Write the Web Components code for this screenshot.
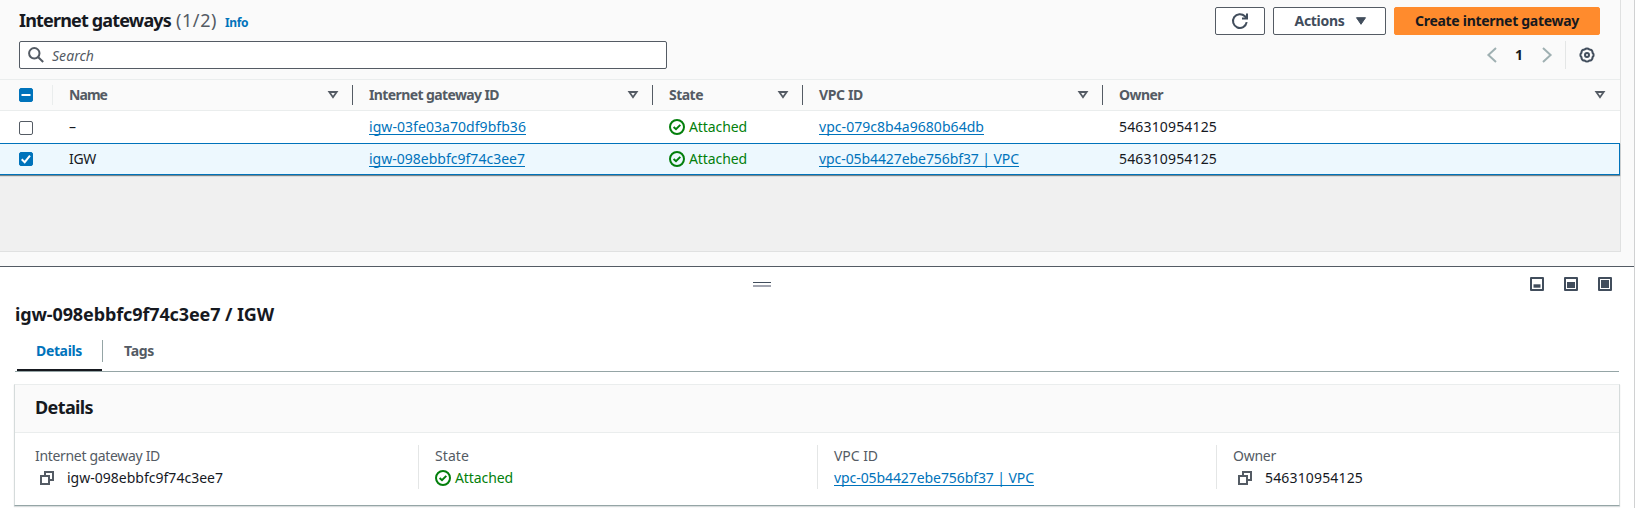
<!DOCTYPE html>
<html lang="en">
<head>
<meta charset="utf-8">
<title>Internet gateways</title>
<style>
html,body{margin:0;height:100%;overflow:hidden}
body{font:14px/22px "Noto Sans","Open Sans",sans-serif;color:#16191f;background:#fff}
</style>
</head>
<body>
<vpc-console></vpc-console>
<script>
function define(name, html, after) {
  const t = document.createElement('template');
  t.innerHTML = html;
  customElements.define(name, class extends HTMLElement {
    constructor() {
      super();
      this.attachShadow({mode: 'open'}).append(t.content.cloneNode(true));
    }
    connectedCallback() { if (after) after(this, this.shadowRoot); }
  });
}

const icons = {
  search: '<circle cx="6.3" cy="6.3" r="5.2" /><path d="M10.2 10.2 15.2 15"/>',
  refresh: '<path d="M14.7 9.2A6.9 6.9 0 1 1 12.9 3.3L14.6 5.2"/><path d="M15 .6V5.6H10"/>',
  caret: '<path d="M3.5 4.7h9L8 11.3z" fill="currentColor" stroke-width="1"/>',
  sort: '<path d="M4.3 5h7.4L8 10.3z" stroke-width="1.8"/>',
  left: '<path d="M12 1 4.4 8l7.6 7"/>',
  right: '<path d="M4 1l7.6 7L4 15"/>',
  gear: '<path d="M5.7 2.46A3 3 0 0 1 10.3 2.46A3 3 0 0 1 13.54 5.7A3 3 0 0 1 13.54 10.3A3 3 0 0 1 10.3 13.54A3 3 0 0 1 5.7 13.54A3 3 0 0 1 2.46 10.3A3 3 0 0 1 2.46 5.7A3 3 0 0 1 5.7 2.46z"/><circle cx="8" cy="8" r="2"/>',
  ok: '<circle cx="8" cy="8" r="7"/><path d="M4.6 8 7 10.2 11.3 5.9"/>',
  copy: '<path d="M2 6h8v8H2z"/><path d="M6 5.5V2h8v8h-3.5"/>',
  low: '<path d="M2 2h12v12H2z" stroke-linejoin="round"/><path d="M4.5 8.3h7v3.4h-7z" fill="currentColor" stroke="none"/>',
  mid: '<path d="M2 2h12v12H2z" stroke-linejoin="round"/><path d="M4 6h8v6H4z" fill="currentColor" stroke="none"/>',
  full: '<path d="M2 2h12v12H2z" stroke-linejoin="round"/><path d="M4 4h8v8H4z" fill="currentColor" stroke="none"/>'
};
define('ui-icon', `<style>:host{display:block;width:16px;height:16px;flex:none}svg{display:block;width:100%;height:100%;overflow:visible;fill:none;stroke:currentColor;stroke-width:2}</style><svg viewBox="0 0 16 16"></svg>`,
  (h, r) => { r.querySelector('svg').innerHTML = icons[h.getAttribute('name')]; });

define('ui-check', `<style>
:host{display:block;box-sizing:border-box;width:14px;height:14px;border:1px solid #545b64;border-radius:2px;background:#fff}
svg{display:none;width:14px;height:14px;margin:-1px;fill:none;stroke:#fff;stroke-width:2}
:host([state]){background:#0073bb;border-color:#0073bb}:host([state]) svg{display:block}
</style><svg viewBox="0 0 14 14"><path/></svg>`,
  (h, r) => r.querySelector('path').setAttribute('d', h.getAttribute('state') === 'some' ? 'M2.5 7h9' : 'M2.7 7.3 5.7 10.2 11 3.6'));

define('ui-link', `<style>:host{color:#0073bb;text-decoration:underline;text-underline-offset:2px;text-decoration-thickness:1px;text-decoration-skip-ink:none}</style><slot></slot>`);

define('ui-status', `<style>:host{display:flex;align-items:center;gap:4px;color:#037f0c}</style><ui-icon name="ok"></ui-icon><slot></slot>`);

define('ui-button', `<style>
:host{display:flex;align-items:center;justify-content:center;gap:8px;box-sizing:border-box;height:28px;border:1px solid #545b64;border-radius:2px;background:#fff;color:#414d5c;font-weight:700}
:host([primary]){background:#ff8b2d;border-color:#ff8b2d;color:#16191f}
</style><slot></slot>`);

define('table-toolbar', `<style>
:host{display:flex;flex-direction:column;box-sizing:border-box;height:79px;padding:7px 20px 0 19px}
.top,.bottom,.title,.actions,.pager{display:flex}
.top{justify-content:space-between;height:34px}
.title{align-items:baseline;height:28px;line-height:26px}
h2{font-size:18px;margin:0 5px 0 0;font-weight:700}
.count{font-size:18px;color:#545b64;margin-right:8px}
.info{font-size:12px;font-weight:700;color:#0073bb}
.actions{gap:8px}.refresh{width:50px}.menu{width:113px}.menu ui-icon{margin-right:-4px}.create{width:206px}
.bottom{justify-content:space-between}
.search{display:flex;align-items:center;box-sizing:border-box;width:648px;height:28px;border:1px solid #545b64;border-radius:2px;background:#fff;padding-left:8px;gap:8px;color:#545b64;font-style:italic}
.search fit-text{padding-top:1px}
.pager{align-items:center;height:28px;padding-right:5px}
.arrow{color:#9fb0b2}
.page{font-weight:700;margin:0 15px 0 14.5px;width:10px;text-align:center}
.rule{width:1px;height:28px;background:#e4e6e6;margin:0 13px 0 10px}
.gear{color:#414d5c}
</style>
<div class="top"><div class="title"><h2><fit-text w="152">Internet gateways</fit-text></h2><span class="count"><fit-text w="41">(1/2)</fit-text></span><span class="info"><fit-text w="23">Info</fit-text></span></div>
<div class="actions"><ui-button class="refresh"><ui-icon name="refresh"></ui-icon></ui-button><ui-button class="menu"><fit-text w="50">Actions</fit-text><ui-icon name="caret"></ui-icon></ui-button><ui-button class="create" primary><fit-text w="164">Create internet gateway</fit-text></ui-button></div></div>
<div class="bottom"><div class="search"><ui-icon name="search"></ui-icon><fit-text w="42">Search</fit-text></div>
<div class="pager"><ui-icon class="arrow" name="left"></ui-icon><span class="page">1</span><ui-icon class="arrow" name="right"></ui-icon><span class="rule"></span><ui-icon class="gear" name="gear"></ui-icon></div></div>`);

define('table-row', `<style>
:host{display:grid;grid-template-columns:53px 300px 300px 150px 300px 1fr;align-items:center;box-sizing:border-box;height:32px;background:#fff}
:host([head]){background:#fafafa;border:solid #eaeded;border-width:1px 0;font-weight:700;color:#545b64}
:host([selected]){background:#edf8fe;border:1px solid #0073bb;border-left:0;box-shadow:0 1px 1px rgba(0,28,36,.5)}
::slotted(*){margin-left:16px}
::slotted(fit-text),::slotted(ui-link){justify-self:start}
::slotted(ui-check){margin-left:19px}
::slotted(ui-check:not([state])){margin-top:2px}
</style><slot></slot>`);

define('head-cell', `<style>
:host{display:flex;align-items:center;justify-content:space-between;height:20px;padding-right:11px;border-right:1px solid #545b64}
:host([last]){border-right:0;padding-right:12px}
ui-icon{color:#545b64}
</style><slot></slot><ui-icon name="sort"></ui-icon>`);

define('gateway-table', `<style>
:host{display:block;box-sizing:border-box;width:1621px;height:252px;background:#f0f0f0;border:solid #e0e1e1;border-width:0 1px 1px 0}
table-toolbar{background:#fafafa}
.pick{display:flex;align-items:center;height:20px;margin-left:0;border-right:1px solid #eaeded}
.pick ui-check{margin-left:19px}
</style>
<table-toolbar></table-toolbar>
<table-row head><div class="pick"><ui-check state="some"></ui-check></div>
<head-cell><fit-text w="38">Name</fit-text></head-cell><head-cell><fit-text w="130">Internet gateway ID</fit-text></head-cell><head-cell><fit-text w="34">State</fit-text></head-cell><head-cell><fit-text w="44">VPC ID</fit-text></head-cell><head-cell last><fit-text w="44">Owner</fit-text></head-cell></table-row>
<table-row><ui-check></ui-check><fit-text w="8">–</fit-text><ui-link><fit-text w="157">igw-03fe03a70df9bfb36</fit-text></ui-link><ui-status><fit-text w="58">Attached</fit-text></ui-status><ui-link><fit-text w="165">vpc-079c8b4a9680b64db</fit-text></ui-link><fit-text w="98">546310954125</fit-text></table-row>
<table-row selected><ui-check state="all"></ui-check><fit-text w="27">IGW</fit-text><ui-link><fit-text w="156">igw-098ebbfc9f74c3ee7</fit-text></ui-link><ui-status><fit-text w="58">Attached</fit-text></ui-status><ui-link><fit-text w="200">vpc-05b4427ebe756bf37 | VPC</fit-text></ui-link><fit-text w="98">546310954125</fit-text></table-row>`);

define('panel-tabs', `<style>
:host{display:flex;align-items:flex-start;box-sizing:border-box;height:38px;border-bottom:1px solid #95a5a6;font-weight:700;color:#545b64;padding-left:2px}
.tab{box-sizing:border-box;height:37px;width:85px;padding:6px 0 0 19px}
.on{color:#0073bb;border-bottom:2px solid #16191f}
.line{width:1px;height:22px;margin-top:6px;background:#95a5a6}
.tag{padding-left:21px}
</style><div class="tab on"><fit-text w="46">Details</fit-text></div><div class="line"></div><div class="tab tag"><fit-text w="30">Tags</fit-text></div>`);

define('detail-field', `<style>
:host{display:block;box-sizing:border-box;height:44px;border-left:1px solid #e4e6e6;padding-left:16px}
:host([first]){border-left-color:transparent}
.label{height:22px;color:#545b64}
.value{display:flex;align-items:center;height:22px}
ui-icon{color:#545b64;margin:0 12px 0 4px}
:host(:not([copy])) ui-icon{display:none}
</style><div class="label"><slot name="label"></slot></div><div class="value"><ui-icon name="copy"></ui-icon><slot></slot></div>`);

define('detail-card', `<style>
:host{display:block;box-sizing:border-box;width:1606px;height:122px;margin-left:-1px;border:1px solid #d5dbdb;border-top-color:#eaeded;border-bottom-color:#95a5a6;box-shadow:0 1px 1px rgba(0,28,36,.15)}
header{box-sizing:border-box;height:48px;border-bottom:1px solid #eaeded;background:#fafafa;padding-left:20px;font:700 18px/44px "Noto Sans",sans-serif}
.fields{display:grid;grid-template-columns:400px 399px 399px 1fr;padding:12px 0 0 3px}
</style><header><fit-text w="58">Details</fit-text></header>
<div class="fields">
<detail-field first copy><fit-text slot="label" w="125">Internet gateway ID</fit-text><fit-text w="156">igw-098ebbfc9f74c3ee7</fit-text></detail-field>
<detail-field><fit-text slot="label" w="34">State</fit-text><ui-status><fit-text w="58">Attached</fit-text></ui-status></detail-field>
<detail-field><fit-text slot="label" w="44">VPC ID</fit-text><ui-link><fit-text w="200">vpc-05b4427ebe756bf37 | VPC</fit-text></ui-link></detail-field>
<detail-field copy><fit-text slot="label" w="43">Owner</fit-text><fit-text w="98">546310954125</fit-text></detail-field>
</div>`);

define('split-panel', `<style>
:host{display:block;box-sizing:border-box;height:242px;background:#fff;border-top:1px solid #545b64;padding-left:15px}
.bar{display:grid;grid-template-columns:738px 1fr auto;height:34px;align-items:center;padding:0 21px 0 0}
.grip{width:18px;height:2px;border-top:1px solid #414d5c;border-bottom:2px solid #a2a5b0;grid-column:2}
.sizes{display:flex;gap:18px;color:#414d5c}
h2{font-size:18px;line-height:26px;margin:0;height:33px}
panel-tabs{width:1604px;margin-bottom:12px}
</style><div class="bar"><div class="grip"></div><div class="sizes"><ui-icon name="low"></ui-icon><ui-icon name="mid"></ui-icon><ui-icon name="full"></ui-icon></div></div>
<h2><fit-text w="259">igw-098ebbfc9f74c3ee7 / IGW</fit-text></h2>
<panel-tabs></panel-tabs><detail-card></detail-card>`);

define('vpc-console', `<style>
:host{display:block;box-sizing:border-box;width:1635px;height:508px;border-right:1px solid #d0d1d2;background:#fafafa}
gateway-table{margin-bottom:14px}
</style><gateway-table></gateway-table><split-panel></split-panel>`);

/* Tracks a label evenly so that it fills the width given in "w". */
define('fit-text', `<style>:host{display:inline;white-space:pre}</style><slot></slot>`, h => {
  h.style.letterSpacing = '0';
  const n = h.textContent.length, natural = h.getBoundingClientRect().width;
  h.style.letterSpacing = ((+h.getAttribute('w') - natural) / n).toFixed(3) + 'px';
});
</script>
</body>
</html>
